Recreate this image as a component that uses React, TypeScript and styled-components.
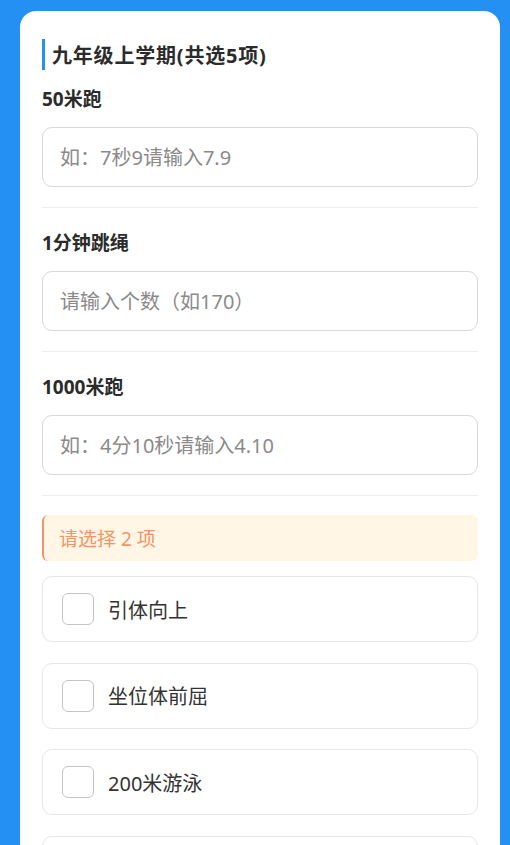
import styled, { createGlobalStyle } from 'styled-components'

const GlobalStyle = createGlobalStyle`
  html, body {
    margin: 0;
    padding: 0;
    background: #2490f4;
  }
  body {
    font-family: "Noto Sans", "Noto Sans CJK SC", sans-serif;
  }
  * { box-sizing: border-box; }
`

const fields = [
  { label: '50米跑', placeholder: '如：7秒9请输入7.9' },
  { label: '1分钟跳绳', placeholder: '请输入个数（如170）' },
  { label: '1000米跑', placeholder: '如：4分10秒请输入4.10' },
]

const options = ['引体向上', '坐位体前屈', '200米游泳', '篮球运球']

const App = () => {
  return (
    <Page>
      <GlobalStyle />
      <Card>
        <Title>九年级上学期(共选5项)</Title>

        {fields.map((f) => (
          <Field key={f.label}>
            <Label>{f.label}</Label>
            <Input placeholder={f.placeholder} />
          </Field>
        ))}

        <Notice>请选择 2 项</Notice>

        <Options>
          {options.map((o) => (
            <Option key={o}>
              <Check />
              <OptionText>{o}</OptionText>
            </Option>
          ))}
        </Options>
      </Card>
    </Page>
  )
}

export default App

const Page = styled('div')`
  height: 845px;
  overflow: hidden;
  padding: 11px 10px 0 20px;
`

const Card = styled('div')`
  width: 480px;
  min-height: 900px;
  background: #ffffff;
  border-radius: 16px;
  padding: 28px 22px 0;
`

const Title = styled('h2')`
  margin: 0;
  height: 31px;
  display: flex;
  align-items: center;
  padding-left: 7px;
  border-left: 3px solid #2490f4;
  font-size: 20px;
  font-weight: 700;
  letter-spacing: 0.8px;
  color: #2b2b2b;
`

const Field = styled('div')`
  padding: 17px 0 20px;
  border-bottom: 1px solid #eeeeee;

  & + & {
    padding-top: 23px;
  }
`

const Label = styled('div')`
  font-size: 19px;
  font-weight: 700;
  color: #2b2b2b;
  line-height: 24px;
  margin-bottom: 16px;
`

const Input = styled('input')`
  display: block;
  width: 100%;
  height: 60px;
  border: 1px solid #d8d8dc;
  border-radius: 10px;
  padding: 0 17px;
  font-family: inherit;
  font-size: 20px;
  color: #333;
  outline: none;

  &::placeholder {
    color: #8a8a8a;
  }
`

const Notice = styled('div')`
  margin-top: 19px;
  height: 46px;
  display: flex;
  align-items: center;
  padding-left: 15px;
  background: #fff6e6;
  border-left: 2px solid #f39465;
  border-radius: 6px;
  font-size: 19px;
  color: #f39465;
`

const Options = styled('div')`
  margin-top: 15px;
  display: flex;
  flex-direction: column;
  gap: 20.5px;
`

const Option = styled('div')`
  height: 66px;
  display: flex;
  align-items: center;
  gap: 14px;
  padding-left: 19px;
  border: 1px solid #e6e6e8;
  border-radius: 10px;
`

const Check = styled('span')`
  width: 32px;
  height: 32px;
  border: 1px solid #c4c4c4;
  border-radius: 6px;
  background: #fff;
`

const OptionText = styled('span')`
  font-size: 20px;
  color: #333;
`
